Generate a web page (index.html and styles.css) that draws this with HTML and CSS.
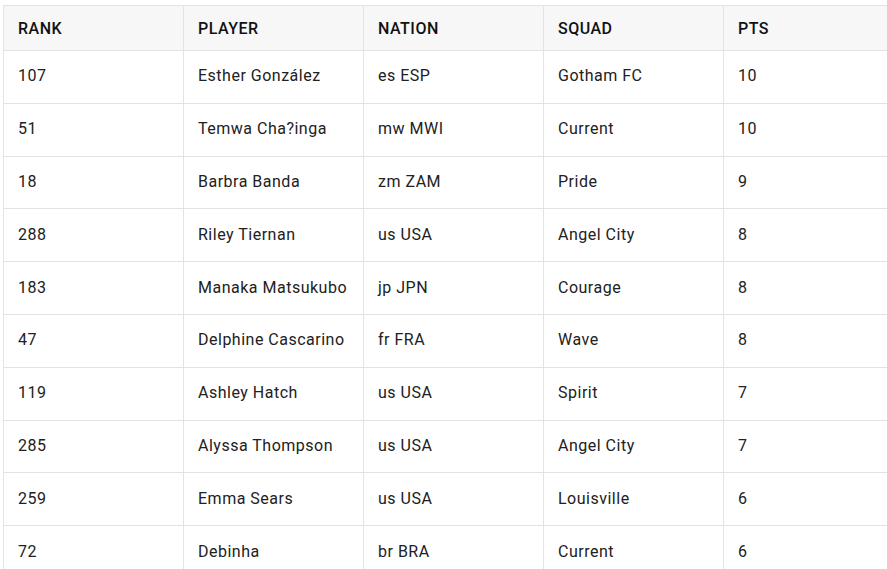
FILE: index.html
```html
<!DOCTYPE html>
<html>
<head>
<meta charset="utf-8">
<link rel="stylesheet" href="styles.css">
</head>
<body>
<div class="wrap">
<table class="stats">
<colgroup><col class="c"><col class="c"><col class="c"><col class="c"><col class="c"></colgroup>
<thead>
<tr><th>RANK</th><th>PLAYER</th><th>NATION</th><th>SQUAD</th><th>PTS</th></tr>
</thead>
<tbody>
<tr><td>107</td><td>Esther González</td><td>es ESP</td><td>Gotham FC</td><td>10</td></tr>
<tr><td>51</td><td>Temwa Cha?inga</td><td>mw MWI</td><td>Current</td><td>10</td></tr>
<tr><td>18</td><td>Barbra Banda</td><td>zm ZAM</td><td>Pride</td><td>9</td></tr>
<tr><td>288</td><td>Riley Tiernan</td><td>us USA</td><td>Angel City</td><td>8</td></tr>
<tr><td>183</td><td>Manaka Matsukubo</td><td>jp JPN</td><td>Courage</td><td>8</td></tr>
<tr><td>47</td><td>Delphine Cascarino</td><td>fr FRA</td><td>Wave</td><td>8</td></tr>
<tr><td>119</td><td>Ashley Hatch</td><td>us USA</td><td>Spirit</td><td>7</td></tr>
<tr><td>285</td><td>Alyssa Thompson</td><td>us USA</td><td>Angel City</td><td>7</td></tr>
<tr><td>259</td><td>Emma Sears</td><td>us USA</td><td>Louisville</td><td>6</td></tr>
<tr><td>72</td><td>Debinha</td><td>br BRA</td><td>Current</td><td>6</td></tr>
</tbody>
</table>
</div>
</body>
</html>
```
FILE: styles.css
```css
html, body {
  margin: 0;
  padding: 0;
  background: #ffffff;
  overflow: hidden;
}
.wrap {
  padding: 5px 0 0 3px;
}
.stats {
  border-collapse: collapse;
  table-layout: fixed;
  width: 901px;
  font-family: Roboto, "Liberation Sans", sans-serif;
  font-size: 16px;
  letter-spacing: 0.5px;
  color: #212121;
}
.stats .c {
  width: 180px;
}
.stats th,
.stats td {
  border: 1px solid #e3e3e3;
  text-align: left;
  line-height: 20px;
  white-space: nowrap;
  overflow: hidden;
}
.stats th {
  background: #f7f7f7;
  font-weight: 500;
  color: #111111;
  height: 42px;
  padding: 2px 14px 0;
}
.stats td {
  height: 50.8px;
  padding: 0 14px 1px;
}
```
